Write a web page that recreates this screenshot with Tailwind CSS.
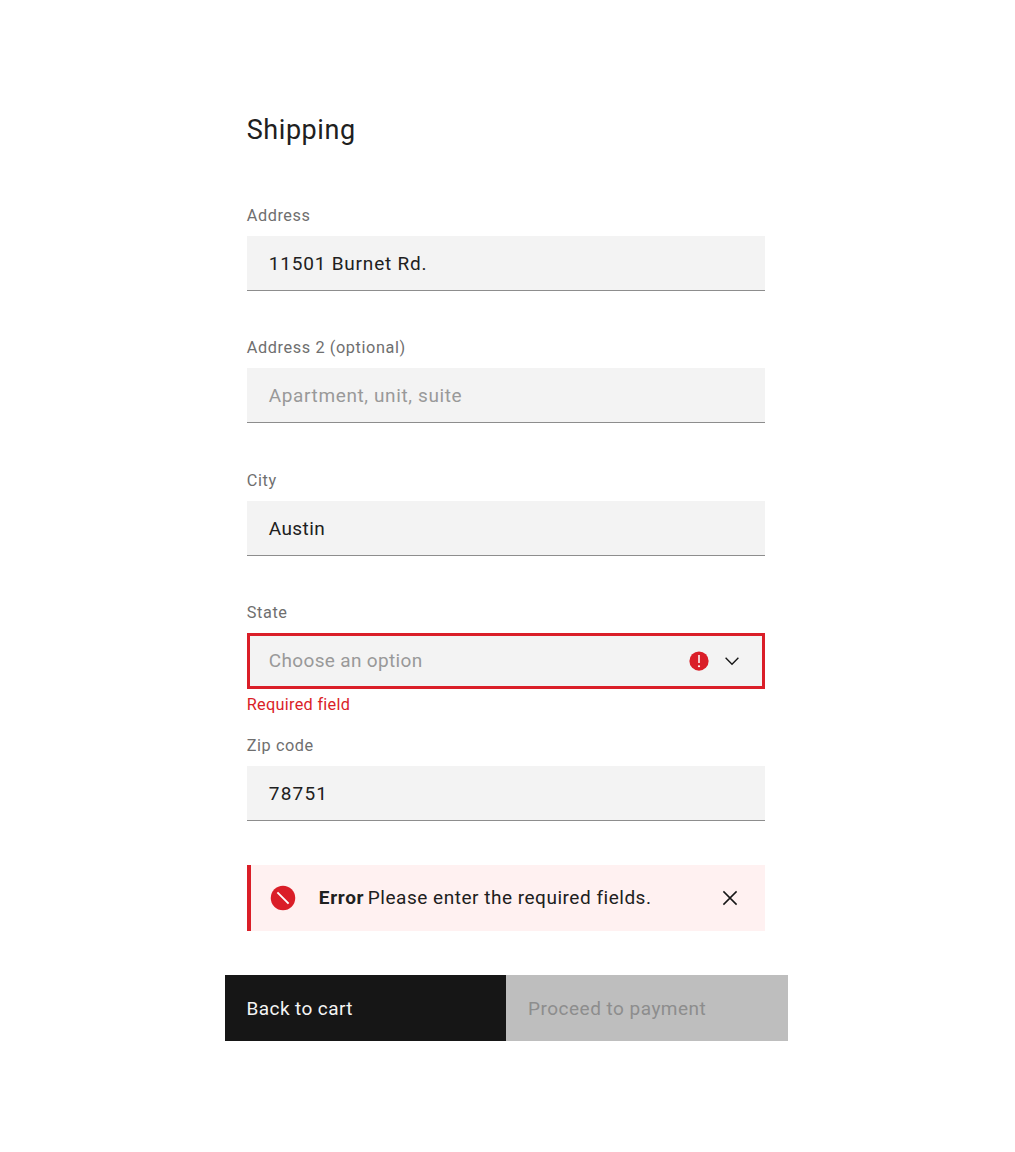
<!DOCTYPE html>
<html lang="en">
<head>
<meta charset="utf-8">
<title>Shipping</title>
<script src="https://cdn.jsdelivr.net/npm/@tailwindcss/browser@4"></script>
</head>
<body class="bg-white font-['Roboto','Noto_Sans',sans-serif] text-[#202020]">
<main class="w-[1015px] h-[1152px] overflow-hidden pt-[109px] pl-[224.6px]">
  <form class="w-[563px]">
    <div class="px-[22.2px]">
      <h1 class="h-[94px] text-[27px] leading-[42px] font-normal"><span class="tracking-[0.55px]">Shipping</span></h1>

      <div class="h-[132.4px]">
        <label class="block mb-[11px] h-[22px] text-[16.3px] leading-[26px] text-[#6f6f6f]"><span class="tracking-[0.55px]">Address</span></label>
        <div class="flex h-[55px] items-center border-b border-[#8d8d8d] bg-[#f3f3f3] px-[22px] pt-[2px] text-[19px]"><span class="tracking-[0.8px]">11501 Burnet Rd.</span></div>
      </div>

      <div class="h-[132.4px]">
        <label class="block mb-[11px] h-[22px] text-[16.3px] leading-[26px] text-[#6f6f6f]"><span class="tracking-[0.6px]">Address 2 (optional)</span></label>
        <div class="flex h-[55px] items-center border-b border-[#8d8d8d] bg-[#f3f3f3] px-[22px] pt-[2px] text-[19px] text-[#999999]"><span class="tracking-[0.62px]">Apartment, unit, suite</span></div>
      </div>

      <div class="h-[132.4px]">
        <label class="block mb-[11px] h-[22px] text-[16.3px] leading-[26px] text-[#6f6f6f]"><span class="tracking-[0.6px]">City</span></label>
        <div class="flex h-[55px] items-center border-b border-[#8d8d8d] bg-[#f3f3f3] px-[22px] pt-[2px] text-[19px]"><span class="tracking-[0.4px]">Austin</span></div>
      </div>

      <div class="h-[132.4px]">
        <label class="block mb-[11px] h-[22px] text-[16.3px] leading-[26px] text-[#6f6f6f]"><span class="tracking-[0.6px]">State</span></label>
        <div class="flex h-[55.4px] items-center border-3 border-[#da1e28] bg-[#f3f3f3] pr-[19px] pl-[19px] text-[19px] text-[#999999]">
          <span class="tracking-[0.34px]">Choose an option</span>
          <svg class="ml-auto size-[22px]" viewBox="0 0 16 16"><circle cx="8" cy="8" r="7" fill="#da1e28"/><path d="M8 3.6v5.8" stroke="#fff" stroke-width="1.1"/><circle cx="8" cy="11.8" r=".8" fill="#fff"/></svg>
          <svg class="ml-[11px] size-[22px]" viewBox="0 0 16 16"><path fill="#161616" d="M8 11 3 6l.7-.7L8 9.6l4.3-4.3.7.7z"/></svg>
        </div>
        <p class="mt-[4px] text-[16.3px] leading-[24px] text-[#da1e28]"><span class="tracking-[0.28px]">Required field</span></p>
      </div>

      <div class="h-[132.4px]">
        <label class="block mb-[11px] h-[22px] text-[16.3px] leading-[26px] text-[#6f6f6f]"><span class="tracking-[0.55px]">Zip code</span></label>
        <div class="flex h-[55px] items-center border-b border-[#8d8d8d] bg-[#f3f3f3] px-[22px] pt-[3px] text-[19px]"><span class="tracking-[1.2px]">78751</span></div>
      </div>

      <div class="flex h-[66px] items-center border-l-4 border-[#da1e28] bg-[#fff1f1] pr-[24.5px] pl-[18px] text-[19px]">
        <svg class="size-[28px] shrink-0" viewBox="0 0 20 20"><circle cx="10" cy="10" r="8.75" fill="#da1e28"/><path d="m6 6 8 8" stroke="#fff" stroke-width="1.4"/></svg>
        <strong class="ml-[22px] pt-[1px] font-bold"><span class="tracking-[0.7px]">Error</span></strong>
        <span class="ml-[3.5px] pt-[1px] tracking-[0.52px]">Please enter the required fields.</span>
        <svg class="ml-auto size-[22px]" viewBox="0 0 16 16"><path d="m3.2 3.2 9.6 9.6m0-9.6-9.6 9.6" stroke="#161616" stroke-width="1.1"/></svg>
      </div>
    </div>

    <div class="mt-[44.4px] flex h-[66px] text-[19px]">
      <button type="button" class="w-1/2 bg-[#161616] pt-[2px] pl-[22px] text-left text-[#f4f4f4]"><span class="tracking-[0.4px]">Back to cart</span></button>
      <button type="button" class="w-1/2 bg-[#bebebe] pt-[2px] pl-[22px] text-left text-[#8d8d8d]"><span class="tracking-[0.48px]">Proceed to payment</span></button>
    </div>
  </form>
</main>
</body>
</html>
